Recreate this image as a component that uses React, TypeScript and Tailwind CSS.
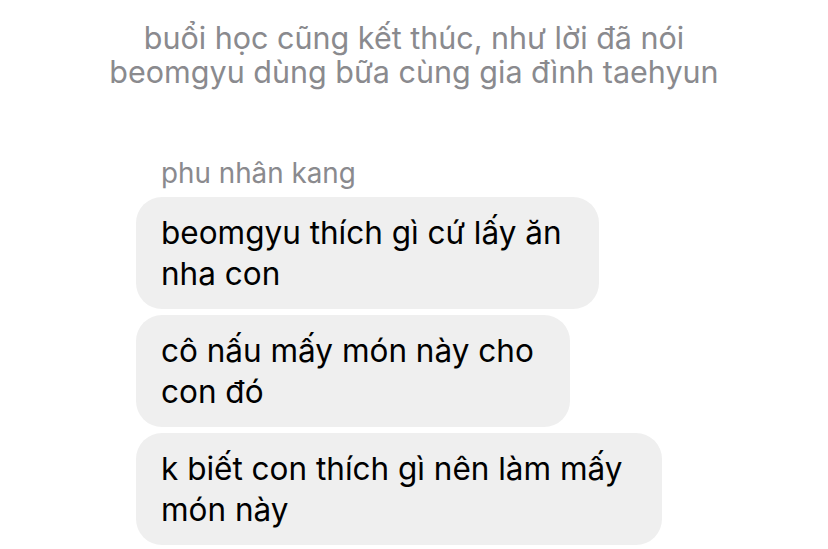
import React from "react";

const font = { fontFamily: "Inter, 'Noto Sans', sans-serif" };

function Bubble({ w, lines }: { w: string; lines: string[] }) {
  return (
    <div className={`${w} h-[112px] rounded-[26px] bg-[#efefef] pl-[25px] pt-[15px] text-[31.5px] leading-[41px] text-black`}>
      {lines.map((l, i) => (
        <div key={i} className="whitespace-nowrap">{l}</div>
      ))}
    </div>
  );
}

export default function App() {
  return (
    <div className="w-[828px] h-[549px] overflow-hidden bg-white" style={font}>
      <div className="pt-[21px] text-center text-[30.5px] leading-[34px] text-[#8a8a8e]">
        <div>buổi học cũng kết thúc, như lời đã nói</div>
        <div>beomgyu dùng bữa cùng gia đình taehyun</div>
      </div>
      <div className="pl-[161px] pt-[68px] text-[27.8px] leading-[32px] text-[#8a8a8e]">phu nhân kang</div>
      <div className="pl-[136px] pt-[8px] flex flex-col gap-[6px]">
        <Bubble w="w-[463px]" lines={["beomgyu thích gì cứ lấy ăn", "nha con"]} />
        <Bubble w="w-[434px]" lines={["cô nấu mấy món này cho", "con đó"]} />
        <Bubble w="w-[526px]" lines={["k biết con thích gì nên làm mấy", "món này"]} />
      </div>
    </div>
  );
}
